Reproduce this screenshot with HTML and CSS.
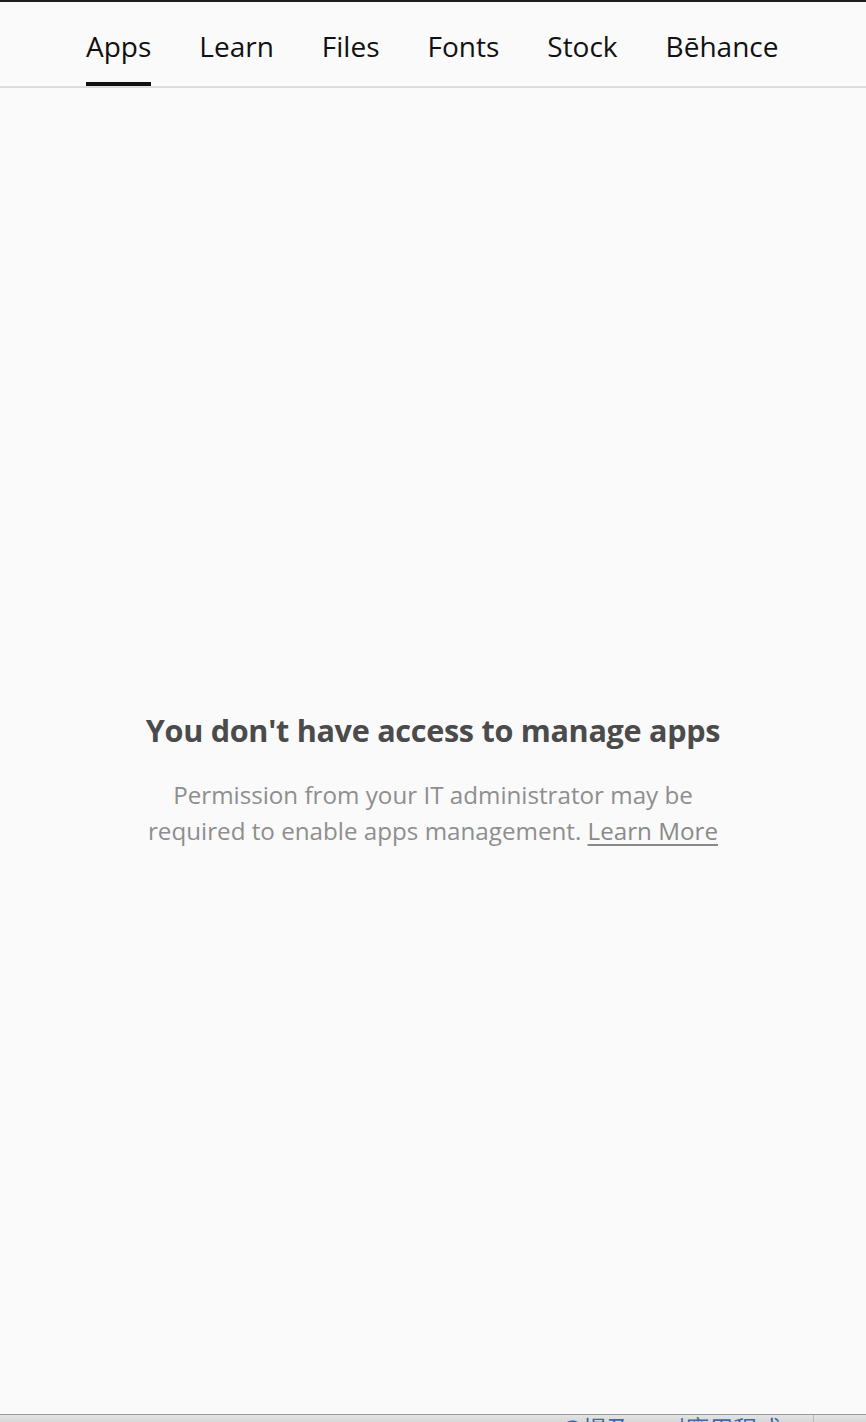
FILE: index.html
```html
<!DOCTYPE html>
<html>
<head>
<meta charset="utf-8">
<link rel="stylesheet" href="styles.css">
</head>
<body>
<div class="window">
  <nav class="tabs">
    <a class="tab active">Apps</a>
    <a class="tab">Learn</a>
    <a class="tab">Files</a>
    <a class="tab">Fonts</a>
    <a class="tab">Stock</a>
    <a class="tab">Bēhance</a>
  </nav>
  <main class="content">
    <div class="message">
      <h1 class="title">You don't have access to manage apps</h1>
      <p class="desc">Permission from your IT administrator may be<br>required to enable apps management. <a class="link">Learn More</a></p>
    </div>
  </main>
</div>
<div class="under">
  <span class="under-text">@提及</span><span class="under-text second">|應用程式</span>
  <span class="under-sep"></span>
</div>
</body>
</html>
```
FILE: styles.css
```css
html, body {
  margin: 0;
  padding: 0;
  background: #dedede;
  overflow: hidden;
}
body {
  width: 866px;
  height: 1422px;
  font-family: "Open Sans", "Noto Sans", sans-serif;
}
.window {
  background: #fafafa;
  border-top: 2px solid #1e1e1e;
  border-bottom: 1px solid #9a9a9a;
  display: flex;
  flex-direction: column;
  box-sizing: border-box;
  height: 1415px;
}
.tabs {
  display: flex;
  gap: 48px;
  padding-left: 86px;
  height: 84px;
  border-bottom: 2px solid #dddddd;
  box-sizing: content-box;
}
.tab {
  font-size: 28px;
  color: #111;
  line-height: 1;
  padding-top: 30px;
  box-sizing: border-box;
  height: 84px;
  border-bottom: 4px solid transparent;
  margin-bottom: -2px;
}
.tab.active {
  border-bottom-color: #111;
}
.content {
  flex: 1;
  display: flex;
  justify-content: center;
  padding-top: 622px;
}
.message {
  text-align: center;
}
.title {
  margin: 0;
  font-size: 30.6px;
  font-weight: 700;
  color: #4b4b4b;
  line-height: 40px;
  letter-spacing: -0.3px;
}
.desc {
  margin: 27px 0 0;
  font-size: 24.2px;
  line-height: 36px;
  color: #8e8e8e;
}
.link {
  color: #8a8a8a;
  text-decoration: underline;
  text-underline-offset: 4px;
  text-decoration-thickness: 2px;
}
.under {
  height: 7px;
  overflow: hidden;
  display: flex;
  background: linear-gradient(#e4e4e4, #d8d8d8);
  position: relative;
}
.under-text {
  font-family: "Noto Sans CJK TC", sans-serif;
  font-size: 24px;
  color: #3b6aa8;
  line-height: 24px;
  margin-top: 1px;
}
.under-text:first-child {
  margin-left: 560px;
}
.under-text.second {
  margin-left: 48px;
}
.under-sep {
  position: absolute;
  left: 813px;
  top: 0;
  width: 1px;
  height: 7px;
  background: #bbb;
}
```
